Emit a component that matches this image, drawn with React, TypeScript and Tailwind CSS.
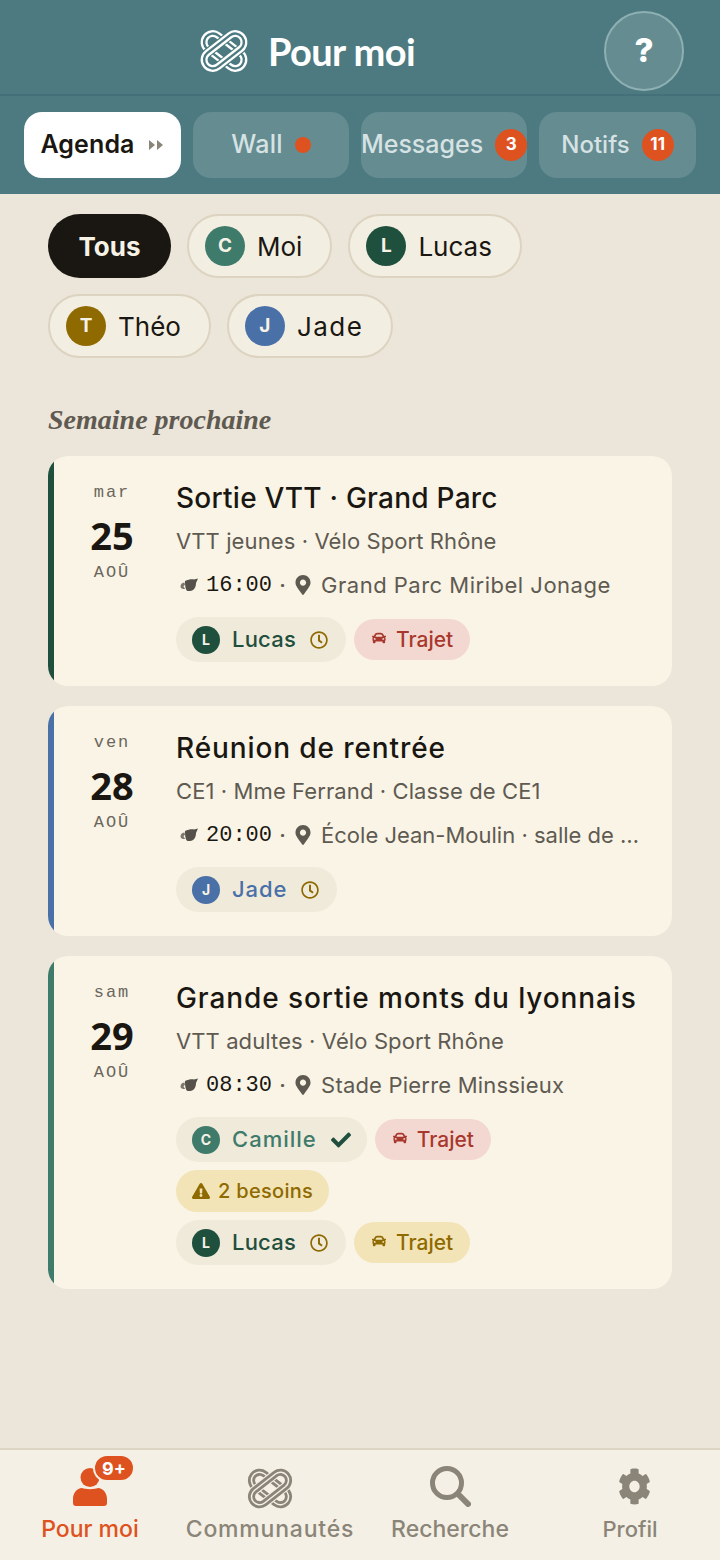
import React from "react";
import { FaCar, FaMapMarkerAlt, FaExclamationTriangle, FaCheck, FaRegClock, FaCog } from "react-icons/fa";

const sans = "font-['Inter',sans-serif]";

function Knot({ w, h, color, bg, thick = 7.6, gap = 2.6 }: { w: number; h: number; color: string; bg: string; thick?: number; gap?: number }) {
  const band = (a: number) => (
    <g transform={`rotate(${a} 24 21)`}>
      <rect x="-1" y="11.5" width="50" height="19" rx="9.5" fill="none" stroke={bg} strokeWidth={thick + 2.4} />
      <rect x="-1" y="11.5" width="50" height="19" rx="9.5" fill="none" stroke={color} strokeWidth={thick} />
      <rect x="-1" y="11.5" width="50" height="19" rx="9.5" fill="none" stroke={bg} strokeWidth={gap} />
    </g>
  );
  return (
    <svg width={w} height={h} viewBox="-3 -3 54 48" className="shrink-0">
      {band(38)}
      {band(-38)}
    </svg>
  );
}

function Teapot() {
  return (
    <svg width="18" height="14" viewBox="0 0 18 14" className="shrink-0">
      <path d="M5 3C8 1.500 12 1 14 1.500L18 .5l-2 4.500C16 9 14 13 10 13H7.500C5.500 12 5 8 5 3z" fill="#55504a" />
      <path d="M.5 8.500C.5 6 2.500 4.500 4.500 4.500L5 7c-1 .2-1.500 1-1.300 2l1.500 1.800C2.500 11.500.5 10.500.5 8.500z" fill="#7d786e" />
    </svg>
  );
}

function Avatar({ l, c, s = 28 }: { l: string; c: string; s?: number }) {
  return (
    <span
      className={`flex shrink-0 items-center justify-center rounded-full font-bold text-[#f7f2e6] ${sans}`}
      style={{ width: s, height: s, background: c, fontSize: s > 30 ? 19 : 14 }}
    >
      {l}
    </span>
  );
}

function Filter({ l, c, name, cls = "" }: { l: string; c: string; name: string; cls?: string }) {
  return (
    <div className="flex h-16 items-center gap-3 rounded-full border-2 border-[#dcd3c0] bg-[#f3eee2] pl-[16px] pr-[28px]">
      <Avatar l={l} c={c} s={40} />
      <span className={`text-[26px] text-[#1a1712] ${sans} ${cls}`}>{name}</span>
    </div>
  );
}

function Person({ l, c, name, check, cls = "" }: { l: string; c: string; name: string; check?: boolean; cls?: string }) {
  return (
    <div className={`flex h-[45px] items-center gap-3 rounded-full bg-[#f0eadb] pl-4 ${check ? "pr-4" : "pr-[18px]"}`}>
      <Avatar l={l} c={c} />
      <span className={`text-[22px] font-medium ${sans} ${cls}`} style={{ color: c }}>{name}</span>
      {check ? <FaCheck size={20} color="#1f4f3d" className="ml-0.5" /> : <FaRegClock size={18} color="#8f6a00" className="ml-0.5" />}
    </div>
  );
}

function Trajet({ red }: { red?: boolean }) {
  const t = red ? "#a8382d" : "#8f6a00";
  return (
    <div className={`flex h-[41px] items-center gap-2.5 rounded-full pl-[18px] pr-[17px] ${red ? "bg-[#f3d8d2]" : "bg-[#f2e4b6]"}`}>
      <FaCar size={14} color={t} className="mb-[3px]" />
      <span className={`text-[21px] font-medium ${sans}`} style={{ color: t }}>Trajet</span>
    </div>
  );
}

function Card({ bar, day, num, title, titleCls, sub, time, place, placeCls = "", children, h }: { bar: string; day: string; num: string; title: string; titleCls: string; sub: string; time: string; place: string; placeCls?: string; children: React.ReactNode; h: string }) {
  return (
    <div className={`flex overflow-hidden rounded-[20px] bg-[#f9f4e6] ${h}`}>
      <div className="w-[6px] shrink-0" style={{ background: bar }} />
      <div className="mr-[6px] flex w-[116px] shrink-0 flex-col items-center pt-[27px]">
        <span className="font-['Liberation_Mono',monospace] text-[17px] leading-5 tracking-[2px] text-[#6b665c]">{day}</span>
        <span className="mt-[10px] font-['Noto_Sans',sans-serif] text-[38px] font-bold leading-[44px] text-[#1a1712]">{num}</span>
        <span className="mt-[6px] font-['Liberation_Mono',monospace] text-[17px] leading-5 tracking-[2px] text-[#6b665c]">AOÛ</span>
      </div>
      <div className="min-w-0 flex-1 pr-7 pt-[24px]">
        <div className={`whitespace-nowrap text-[28px] font-medium leading-9 text-[#1a1712] ${sans} ${titleCls}`}>{title}</div>
        <div className={`mt-[10px] text-[22px] leading-[30px] tracking-[0.1px] text-[#5f5a51] ${sans}`}>{sub}</div>
        <div className="mt-[14px] flex h-[30px] items-center pl-1">
          <Teapot />
          <span className="ml-[8px] font-['Liberation_Mono',monospace] text-[22px] text-[#1a1712]">{time}</span>
          <span className="mx-[8px] text-[18px] font-bold text-[#5f5a51]">·</span>
          <FaMapMarkerAlt size={20} color="#5f5a51" className="shrink-0" />
          <span className={`ml-[8px] whitespace-nowrap text-[22px] text-[#5f5a51] ${sans} ${placeCls}`}>{place}</span>
        </div>
        <div className="mt-[17px] flex flex-col items-start gap-2">{children}</div>
      </div>
    </div>
  );
}

function Tab({ children, w, active }: { children: React.ReactNode; w: string; active?: boolean }) {
  return (
    <div className={`flex h-[66px] items-center justify-center gap-3 rounded-[18px] ${w} ${active ? "bg-white" : "bg-[#648c91]"}`}>
      {children}
    </div>
  );
}

function Badge({ n }: { n: string }) {
  return (
    <span className={`flex h-8 w-8 shrink-0 items-center justify-center rounded-full bg-[#de5220] text-[17px] font-bold text-white ${sans}`}>{n}</span>
  );
}

function NavItem({ icon, label, color, cls = "" }: { icon: React.ReactNode; label: string; color: string; cls?: string }) {
  return (
    <div className="flex w-[180px] flex-col items-center">
      <div className="relative flex h-[59px] w-full items-end justify-center">{icon}</div>
      <span className={`mt-[6px] whitespace-nowrap font-medium leading-7 ${sans} ${cls}`} style={{ color }}>{label}</span>
    </div>
  );
}

export default function App() {
  return (
    <div className="flex h-[1560px] w-[720px] flex-col overflow-hidden bg-[#ece5d9]">
      <header className="h-[194px] shrink-0 bg-[#4c7a80]">
        <div className="flex h-[96px] items-center border-b-2 border-[#44707a] pl-[10px] pr-9 pt-2">
          <div className="flex flex-1 items-center justify-center gap-[19px]">
            <Knot w={50} h={44} color="#ffffff" bg="#4c7a80" />
            <span className="pt-[1px] font-['Lato',sans-serif] text-[38px] font-bold tracking-[-0.6px] text-white">Pour moi</span>
          </div>
          <div className={`flex h-20 w-20 items-center justify-center rounded-full border-2 border-[#8fb0b3] bg-[#648c91] text-[33px] font-extrabold text-white ${sans}`}>?</div>
        </div>
        <div className="flex gap-3 pl-6 pt-4">
          <Tab w="w-[157px]" active>
            <span className={`text-[25px] font-semibold tracking-[0.1px] text-[#1a1712] ${sans}`}>Agenda</span>
            <svg width="18" height="14" viewBox="0 0 18 14" className="text-[#8a8578]"><path d="M2 2l6 5-6 5zM10 2l6 5-6 5z" fill="currentColor" /></svg>
          </Tab>
          <Tab w="w-[156px]">
            <span className={`text-[25px] font-medium tracking-[0.2px] text-[#d6e2e3] ${sans}`}>Wall</span>
            <span className="h-4 w-4 rounded-full bg-[#de5220]" />
          </Tab>
          <Tab w="w-[166px]">
            <span className={`text-[25px] font-medium text-[#d6e2e3] ${sans}`}>Messages</span>
            <Badge n="3" />
          </Tab>
          <Tab w="w-[157px]">
            <span className={`text-[24px] font-medium text-[#d6e2e3] ${sans}`}>Notifs</span>
            <Badge n="11" />
          </Tab>
        </div>
      </header>

      <main className="flex-1 px-12 pt-5">
        <div className="flex flex-wrap gap-4">
          <div className={`flex h-16 w-[123px] items-center justify-center rounded-full bg-[#1a1712] text-[26px] font-bold text-[#f7f2e6] ${sans}`}>Tous</div>
          <Filter l="C" c="#3e7b6b" name="Moi" />
          <Filter l="L" c="#1f4f3d" name="Lucas" />
          <Filter l="T" c="#8f6a00" name="Théo" />
          <Filter l="J" c="#4a70a8" name="Jade" cls="tracking-[1.5px]" />
        </div>

        <h2 className="mt-[44px] font-['Liberation_Serif',serif] text-[28px] font-bold italic leading-9 text-[#5f5a51]">Semaine prochaine</h2>

        <div className="mt-[18px] flex flex-col gap-5">
          <Card h="h-[230px]" bar="#1f4f3d" day="mar" num="25" title="Sortie VTT · Grand Parc" titleCls="tracking-[0.25px]" sub="VTT jeunes · Vélo Sport Rhône" time="16:00" place="Grand Parc Miribel Jonage" placeCls="tracking-[0.5px]">
            <div className="flex items-center gap-2">
              <Person l="L" c="#1f4f3d" name="Lucas" cls="tracking-[0.2px]" />
              <Trajet red />
            </div>
          </Card>
          <Card h="h-[230px]" bar="#4a70a8" day="ven" num="28" title="Réunion de rentrée" titleCls="tracking-[0.9px]" sub="CE1 · Mme Ferrand · Classe de CE1" time="20:00" place="École Jean-Moulin · salle de …">
            <Person l="J" c="#4a70a8" name="Jade" cls="tracking-[0.9px]" />
          </Card>
          <Card h="h-[333px]" bar="#3e7b6b" day="sam" num="29" title="Grande sortie monts du lyonnais" titleCls="tracking-[0.9px]" sub="VTT adultes · Vélo Sport Rhône" time="08:30" place="Stade Pierre Minssieux" placeCls="tracking-[0.2px]">
            <div className="flex items-center gap-2">
              <Person l="C" c="#3e7b6b" name="Camille" cls="tracking-[1px]" check />
              <Trajet red />
            </div>
            <div className="flex h-[42px] items-center gap-2 rounded-full bg-[#f2e4b6] pl-4 pr-4">
              <FaExclamationTriangle size={18} color="#8f6a00" />
              <span className={`text-[20px] font-medium tracking-[0.3px] text-[#8f6a00] ${sans}`}>2 besoins</span>
            </div>
            <div className="flex items-center gap-2">
              <Person l="L" c="#1f4f3d" name="Lucas" cls="tracking-[0.2px]" />
              <Trajet />
            </div>
          </Card>
        </div>
      </main>

      <nav className="flex h-[112px] shrink-0 border-t-2 border-[#dcd5c4] bg-[#f5f0e5]">
        <NavItem
          label="Pour moi"
          color="#de5220"
          cls="text-[23px]"
          icon={
            <>
              <svg width="34" height="38" viewBox="0 0 34 38" className="mb-[3px]" fill="#de5220">
                <circle cx="17" cy="9.500" r="9.500" />
                <path d="M3 38c-2 0-3-1-3-3v-4c0-6 4-11 9-11 3 1.500 13 1.500 16 0 5 0 9 5 9 11v4c0 2-1 3-3 3z" />
              </svg>
              <span className={`absolute left-[93px] top-[4px] flex h-[28px] w-[42px] items-center justify-center rounded-[14px] border-2 border-[#f5f0e5] bg-[#de5220] text-[18px] font-bold text-white ${sans}`}>9+</span>
            </>
          }
        />
        <NavItem label="Communautés" color="#8a8578" cls="text-[23px] tracking-[0.8px]" icon={<Knot w={46} h={41} color="#8a8578" bg="#f5f0e5" thick={8.4} gap={1.8} />} />
        <NavItem
          label="Recherche"
          color="#8a8578"
          cls="text-[23px]"
          icon={
            <svg width="41" height="41" viewBox="0 0 41 41" fill="none" stroke="#8a8578" strokeLinecap="round" className="mb-[2px]">
              <circle cx="17" cy="17" r="14.500" strokeWidth="5" />
              <path d="M28 28l10 10" strokeWidth="6" />
            </svg>
          }
        />
        <NavItem label="Profil" color="#8a8578" cls="text-[22px]" icon={<FaCog color="#8a8578" preserveAspectRatio="none" className="mb-[4px] ml-2 h-[37px] w-[33px]" />} />
      </nav>
    </div>
  );
}
